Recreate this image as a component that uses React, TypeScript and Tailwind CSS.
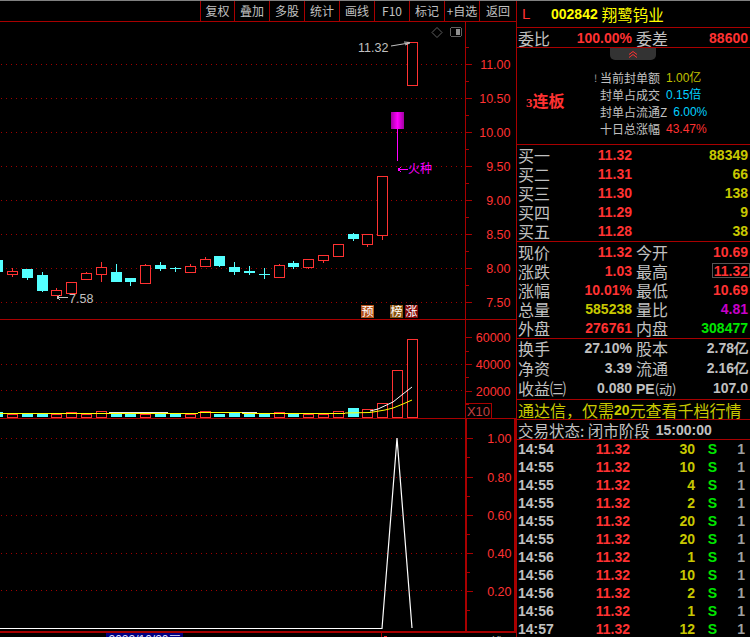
import React from "react";

const RED = "#ff3232";
const FRAME = "#a80000";
const CJK = '"Noto Sans CJK SC", "Liberation Sans", sans-serif';

type C = [number, number, number, number, number, boolean];
// center x, body top, body bottom, wick top, wick bottom, isUp
const candles: C[] = [
  [-3, 260, 272, 260, 272, false],
  [12, 271, 274, 268, 277, true],
  [27, 269, 278, 269, 280, false],
  [42, 275, 291, 272, 292, false],
  [56, 290, 295, 288, 295, true],
  [71, 282, 293, 282, 294, true],
  [86, 273, 279, 272, 280, true],
  [101, 267, 274, 262, 282, true],
  [116, 272, 282, 264, 282, false],
  [130, 278, 282, 278, 286, false],
  [145, 265, 283, 264, 284, true],
  [160, 265, 269, 262, 271, false],
  [175, 268, 269, 267, 272, false],
  [190, 266, 272, 264, 272, true],
  [205, 259, 266, 257, 266, true],
  [219, 256, 266, 256, 267, false],
  [234, 267, 272, 262, 275, false],
  [249, 271, 273, 266, 275, false],
  [264, 274, 275, 268, 279, false],
  [279, 265, 277, 264, 277, true],
  [293, 263, 267, 261, 269, false],
  [308, 259, 267, 259, 269, true],
  [323, 255, 260, 255, 263, true],
  [338, 244, 256, 244, 256, true],
  [353, 234, 239, 233, 241, false],
  [367, 234, 244, 234, 247, true],
  [382, 176, 235, 176, 240, true],
  [412, 42, 85, 42, 85, true],
];

const volumes: [number, number, boolean][] = [
  [-3, 412, false], [12, 414, true], [27, 414, false], [42, 414, false], [56, 414, true],
  [71, 412, true], [86, 414, true], [101, 411, true], [116, 414, false], [130, 414, false],
  [145, 414, true], [160, 414, false], [175, 414, false], [190, 414, true], [205, 411, true],
  [219, 414, false], [234, 413, false], [249, 414, false], [264, 414, false], [279, 412, true],
  [293, 414, false], [308, 414, true], [323, 414, true], [338, 411, true], [353, 408, false],
  [367, 409, true], [382, 403, true], [397, 370, true], [412, 339, true],
];

function Dots({ ys, w = 465 }: { ys: number[]; w?: number }) {
  return (
    <>
      {ys.map((y) => (
        <line key={y} x1={1} x2={w} y1={y + 0.5} y2={y + 0.5} stroke="#a00000" strokeDasharray="1 4" />
      ))}
    </>
  );
}

function Axis({ top, h, labels, ticks }: { top: number; h: number; labels: [string, number][]; ticks: number[] }) {
  return (
    <svg width={50} height={h} viewBox={`0 ${top} 50 ${h}`} className="block shrink-0" shapeRendering="crispEdges">
      {ticks.map((y) => (
        <line key={y} x1={0} x2={3} y1={y + 0.5} y2={y + 0.5} stroke={FRAME} />
      ))}
      {labels.map(([t, y]) => (
        <g key={t}>
          <line x1={0} x2={6} y1={y + 0.5} y2={y + 0.5} stroke={FRAME} />
          <text x={44.5} y={y + 5} textAnchor="end" fill={RED} fontSize={12.5} fontFamily='"Liberation Sans", sans-serif' shapeRendering="auto">
            {t}
          </text>
        </g>
      ))}
    </svg>
  );
}

function MainChart() {
  return (
    <svg width={465} height={297} viewBox="0 22 465 297" className="block shrink-0" shapeRendering="crispEdges">
      <defs>
        <linearGradient id="mg" x1="0" x2="1" y1="0" y2="0">
          <stop offset="0" stopColor="#a000a0" />
          <stop offset="0.5" stopColor="#ff00ff" />
          <stop offset="1" stopColor="#a000a0" />
        </linearGradient>
      </defs>
      <Dots ys={[64, 98, 132, 166, 200, 234, 268, 302]} />
      {candles.map(([x, t, b, wt, wb, up]) => (
        <g key={x}>
          <line x1={x + 0.5} x2={x + 0.5} y1={wt} y2={wb} stroke={up ? RED : "#54ffff"} />
          {up ? (
            <rect x={x - 5 + 0.5} y={t + 0.5} width={10} height={b - t} fill="#000" stroke={RED} />
          ) : (
            <rect x={x - 5} y={t} width={11} height={Math.max(b - t, 1)} fill="#54ffff" />
          )}
        </g>
      ))}
      <line x1={397.5} x2={397.5} y1={128} y2={161} stroke="#ff00ff" />
      <rect x={391} y={112} width={13} height={17} fill="url(#mg)" />

      <text x={358} y={52} fill="#c0c0c0" fontSize={12.5} fontFamily='"Liberation Sans", sans-serif' shapeRendering="auto">11.32</text>
      <path d="M391 46 L409 43 M404 42 L410 42.5 M405 45 L410 43" stroke="#c0c0c0" fill="none" shapeRendering="auto" />
      <text x={69} y={303} fill="#c0c0c0" fontSize={12.5} fontFamily='"Liberation Sans", sans-serif' shapeRendering="auto">7.58</text>
      <path d="M57 297.5 H68 M57 297.5 L60 295 M57 297.5 L60 300" stroke="#c0c0c0" fill="none" />
      <path d="M398 169.5 H408 M398 169.5 L401 167 M398 169.5 L401 172" stroke="#ff00ff" fill="none" />
      <text x={408} y={173} fill="#ff00ff" fontSize={12} fontFamily={CJK} shapeRendering="auto">火种</text>

      <rect x={361} y={305} width={13} height={13} fill="#b4521a" />
      <text x={361.5} y={316} fill="#fff" fontSize={12} fontFamily={CJK} shapeRendering="auto">预</text>
      <rect x={390} y={305} width={13} height={13} fill="#8a5410" />
      <text x={390.5} y={316} fill="#fff" fontSize={12} fontFamily={CJK} shapeRendering="auto">榜</text>
      <rect x={405} y={305} width={13} height={13} fill="#800a0a" />
      <text x={405.5} y={316} fill="#fff" fontSize={12} fontFamily={CJK} shapeRendering="auto">涨</text>

      <path d="M437 27.5 L442 32.5 L437 37.5 L432 32.5 Z" fill="none" stroke="#606060" shapeRendering="auto" />
      <rect x={450.5} y={27.5} width={11} height={9} rx={2} fill="none" stroke="#606060" strokeWidth={1} />
      <rect x={456} y={29} width={4} height={6} fill="#909090" />
    </svg>
  );
}

function VolumeChart() {
  return (
    <svg width={465} height={98} viewBox="0 320 465 98" className="block shrink-0" shapeRendering="crispEdges">
      <Dots ys={[364, 390]} />
      {volumes.map(([x, t, up]) =>
        up ? (
          <rect key={x} x={x - 5 + 0.5} y={t + 0.5} width={10} height={417 - t - 0.5} fill="#000" stroke={RED} />
        ) : (
          <rect key={x} x={x - 5} y={t} width={11} height={417 - t} fill="#54ffff" />
        )
      )}
      <path d="M0 413.5 H198 M242 413.5 H345" stroke="#ffff00" fill="none" strokeWidth={1} />
      <path d="M198 412.5 H242" stroke="#ffff00" fill="none" />
      <path d="M109 412.5 H168 M242 412.5 H257" stroke="#e8e8e8" fill="none" />
      <path d="M345 413 L370 412.5 L385 410 L393 408 L403 404 L412 400" stroke="#ffff00" fill="none" shapeRendering="auto" />
      <path d="M370 411 L378 409 L393 402 L403 394 L412 387" stroke="#fff" fill="none" shapeRendering="auto" />
    </svg>
  );
}

function LowerChart() {
  return (
    <svg width={465} height={212} viewBox="0 419 465 212" className="block shrink-0" shapeRendering="crispEdges">
      <Dots ys={[438, 477, 515, 553, 590]} />
      <path d="M0 628.5 H382 L397 438 L412 628" stroke="#fff" strokeWidth={1.2} fill="none" shapeRendering="auto" />
    </svg>
  );
}

function Toolbar() {
  const items: [string, string][] = [
    ["复权", "w-[34px]"], ["叠加", "w-[35px]"], ["多股", "w-[35px]"], ["统计", "w-[35px]"], ["画线", "w-[35px]"],
    ["F10", "w-[35px]"], ["标记", "w-[35px]"], ["+自选", "w-[35px]"], ["返回", "w-[37px]"],
  ];
  return (
    <div className="h-[20px] shrink-0 flex justify-end border-b border-[#a80000] box-content">
      {items.map(([t, w]) => (
        <div
          key={t}
          className={`${w} h-[20px] flex items-center justify-center border-l border-[#a80000] text-[12px] leading-[14px] text-[#c0c0c0] whitespace-nowrap`}
        >
          {t}
        </div>
      ))}
    </div>
  );
}

function Left() {
  return (
    <div className="w-[516px] shrink-0 flex flex-col border-r border-[#a80000] box-content">
      <Toolbar />
      <div className="flex shrink-0 h-[297px] border-b border-[#a80000] box-content">
        <MainChart />
        <div className="border-l border-[#a80000]">
          <Axis
            top={22}
            h={297}
            labels={[["11.00", 64], ["10.50", 98], ["10.00", 132], ["9.50", 166], ["9.00", 200], ["8.50", 234], ["8.00", 268], ["7.50", 302]]}
            ticks={[47, 81, 115, 149, 183, 217, 251, 285]}
          />
        </div>
      </div>
      <div className="flex shrink-0 h-[98px] border-b border-[#a80000] box-content">
        <VolumeChart />
        <div className="relative border-l border-[#a80000]">
          <Axis top={320} h={98} labels={[["60000", 337], ["40000", 364], ["20000", 391]]} ticks={[351, 377, 404]} />
          <div className="absolute left-0 bottom-0 w-[26px] h-[15px] border-t border-r border-[#a80000] text-[13px] leading-[15px] text-center text-[#c04040] font-['Liberation_Sans']">
            X10
          </div>
        </div>
      </div>
      <div className="flex shrink-0 h-[212px] border-b-2 border-[#a80000] box-content">
        <LowerChart />
        <div className="border-l-2 border-r-2 border-[#a80000] w-[51px] overflow-hidden">
          <Axis
            top={419}
            h={212}
            labels={[["1.00", 438], ["0.80", 477], ["0.60", 515], ["0.40", 553], ["0.20", 591]]}
            ticks={[457, 496, 534, 572, 610]}
          />
        </div>
      </div>
      <div className="relative flex-1 overflow-hidden">
        <div className="absolute left-[106px] top-0 w-[77px] h-[16px] bg-[#000080] text-[12px] leading-[12px] pt-[1px] text-[#e0e0ff] text-center font-['Liberation_Sans']">
          2022/10/20三
        </div>
        <div className="absolute left-[381px] top-0 w-px h-[5px] bg-[#a80000]" />
        <div className="absolute left-[384px] top-[3px] w-[3px] h-[2px] bg-[#ff3232]" />
        <div className="absolute left-[477px] top-[1px] text-[13px] leading-[16px] text-[#c0c0c0]">日线</div>
      </div>
    </div>
  );
}

function Num({ c, children, className = "text-right" }: { c: string; children: React.ReactNode; className?: string }) {
  return (
    <span className={`font-['Liberation_Sans'] font-bold text-[14px] leading-[16px] whitespace-nowrap ${className}`} style={{ color: c }}>
      {children}
    </span>
  );
}

function Label({ children, className = "" }: { children: React.ReactNode; className?: string }) {
  return <span className={`text-[16px] leading-[16px] text-[#c0c0c0] whitespace-nowrap ${className}`}>{children}</span>;
}

function Row({ a, av, ac, b, bv, bc, h = "h-[19px]", boxed = false }: { a: React.ReactNode; av: string; ac: string; b: React.ReactNode; bv: string; bc: string; h?: string; boxed?: boolean }) {
  return (
    <div className={`grid grid-cols-[32px_82px_36px_80px] items-center pl-[1px] ${h}`}>
      <Label>{a}</Label>
      <Num c={ac}>{av}</Num>
      <Label className="pl-[4px]">{b}</Label>
      {boxed ? (
        <span className="justify-self-end -mr-[2px] border border-[#555] pl-[1px] pr-[1px] h-[15px] flex items-center">
          <Num c={bc}>{bv}</Num>
        </span>
      ) : (
        <Num c={bc}>{bv}</Num>
      )}
    </div>
  );
}

function Info({ a, v, c }: { a: string; v: string; c: string }) {
  return (
    <div className="flex h-[17.3px] items-center text-[12px] leading-[14px] text-[#c0c0c0] whitespace-nowrap">
      <span>{a}</span>
      <span className="ml-[6px] font-['Liberation_Sans','Noto_Sans_CJK_SC']" style={{ color: c }}>{v}</span>
    </div>
  );
}

function Right() {
  const YEL = "#c8c800";
  const buy: [string, string, string][] = [
    ["买一", "11.32", "88349"], ["买二", "11.31", "66"], ["买三", "11.30", "138"], ["买四", "11.29", "9"], ["买五", "11.28", "38"],
  ];
  const tape: [string, string][] = [
    ["14:54", "30"], ["14:55", "10"], ["14:55", "4"], ["14:55", "2"], ["14:55", "20"], ["14:55", "20"],
    ["14:56", "1"], ["14:56", "10"], ["14:56", "2"], ["14:56", "1"], ["14:57", "12"],
  ];
  return (
    <div className="flex-1 min-w-0 flex flex-col overflow-hidden">
      <div className="h-[26px] shrink-0 flex items-center border-b border-[#a80000] box-content">
        <span className="ml-[5px] w-[29px] text-[15px] leading-[18px] font-['Liberation_Sans'] text-[#ff3232]">L</span>
        <span className="font-['Liberation_Sans'] font-bold text-[14px] leading-[18px] text-[#ffff00]">002842</span>
        <span className="ml-[4px] text-[15.5px] leading-[18px] text-[#ffff00]">翔鹭钨业</span>
      </div>
      <div className="border-b border-[#a80000] box-content h-[19px] shrink-0">
        <Row a="委比" av="100.00%" ac={RED} b="委差" bv="88600" bc={RED} />
      </div>
      <div className="relative h-[96px] shrink-0 flex items-center border-b border-[#a80000] box-content">
        <div className="absolute left-[93px] top-0 w-[46px] h-[12px] bg-[#333] rounded-b-[5px] flex flex-col items-center justify-center">
          <svg width={10} height={7} viewBox="0 0 10 7" fill="none" stroke={RED}>
            <path d="M1 3.5 L5 0.5 L9 3.5 M1 6.5 L5 3.5 L9 6.5" />
          </svg>
        </div>
        <div className="w-[83px] pl-[9px] text-[#ff3232] font-bold font-['Liberation_Serif','Noto_Sans_CJK_SC'] flex items-baseline mt-[12px] leading-[18px]">
          <span className="text-[13px]">3</span>
          <span className="text-[16px]">连板</span>
        </div>
        <div className="pt-[15px]">
          <div className="relative">
            <span className="absolute -left-[6px] top-[3px] text-[10px] leading-[12px] text-[#a0a0a0]">!</span>
            <Info a="当前封单额" v="1.00亿" c="#c0c000" />
          </div>
          <Info a="封单占成交" v="0.15倍" c="#00d0ff" />
          <Info a="封单占流通Z" v="6.00%" c="#00d0ff" />
          <Info a="十日总涨幅" v="43.47%" c={RED} />
        </div>
      </div>
      <div className="h-[97px] shrink-0 border-b border-[#a80000]">
        {buy.map(([a, p, v]) => (
          <div key={a} className="grid grid-cols-[32px_82px_116px] items-center pl-[1px] h-[19px]">
            <Label>{a}</Label>
            <Num c={RED}>{p}</Num>
            <Num c={YEL}>{v}</Num>
          </div>
        ))}
      </div>
      <div className="h-[97px] shrink-0 border-b border-[#a80000]">
        <Row a="现价" av="11.32" ac={RED} b="今开" bv="10.69" bc={RED} />
        <Row a="涨跌" av="1.03" ac={RED} b="最高" bv="11.32" bc={RED} boxed />
        <Row a="涨幅" av="10.01%" ac={RED} b="最低" bv="10.69" bc={RED} />
        <Row a="总量" av="585238" ac={YEL} b="量比" bv="4.81" bc="#c800c8" />
        <Row a="外盘" av="276761" ac={RED} b="内盘" bv="308477" bc="#00e600" />
      </div>
      <div className="h-[60px] shrink-0 flex flex-col border-b border-[#a80000] box-content">
        <Row a="换手" av="27.10%" ac="#c0c0c0" b="股本" bv="2.78亿" bc="#c0c0c0" h="h-[20px] shrink-0 -mt-px" />
        <Row a="净资" av="3.39" ac="#c0c0c0" b="流通" bv="2.16亿" bc="#c0c0c0" h="h-[20px] shrink-0" />
        <Row
          a="收益㈢"
          av="0.080"
          ac="#c0c0c0"
          b={<><span className="font-['Liberation_Sans'] font-bold text-[14px]">PE</span><span className="text-[13px]">(动)</span></>}
          bv="107.0"
          bc="#c0c0c0"
          h="h-[20px] shrink-0"
        />
      </div>
      <div className="h-[19px] shrink-0 pl-[1px] flex items-center border-b border-[#a80000] box-content text-[16px] leading-[18px] text-[#c8c800] whitespace-nowrap">
        通达信，仅需<span className="font-['Liberation_Sans'] font-bold text-[14px]">20</span>元查看千档行情
      </div>
      <div className="h-[19px] shrink-0 pl-[1px] flex items-center border-b border-[#a80000] box-content text-[15.5px] leading-[18px] text-[#c0c0c0] whitespace-nowrap">
        交易状态: 闭市阶段<span className="ml-[6px] font-['Liberation_Sans'] font-bold text-[14px]">15:00:00</span>
      </div>
      <div className="shrink-0">
        {tape.map(([t, v], i) => (
          <div key={i} className="grid grid-cols-[36px_76px_65px_22px_28px] h-[18px] items-center pl-[1px]">
            <Num c="#c0c0c0" className="text-left">{t}</Num>
            <Num c={RED}>11.32</Num>
            <Num c={YEL}>{v}</Num>
            <Num c="#00e600">S</Num>
            <Num c="#a0a0a0">1</Num>
          </div>
        ))}
      </div>
    </div>
  );
}

export default function App() {
  return (
    <div className="w-[750px] h-[637px] bg-black overflow-hidden font-['Noto_Sans_CJK_SC','Liberation_Sans',sans-serif]">
      <div className="h-px bg-[#808080]" />
      <div className="flex h-[636px]">
        <Left />
        <Right />
      </div>
    </div>
  );
}
